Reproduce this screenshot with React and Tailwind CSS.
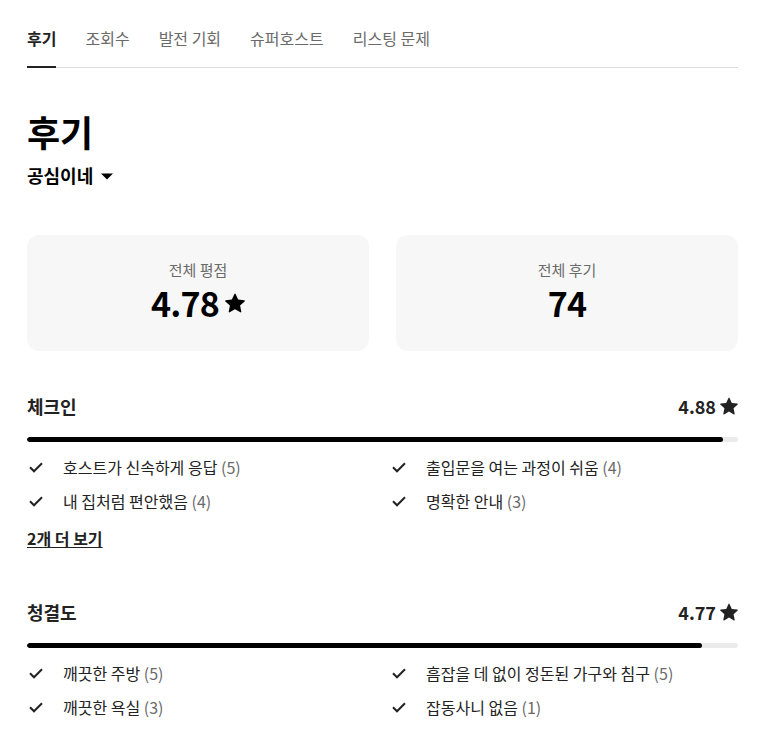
import React from 'react';

const tabs = ['후기', '조회수', '발전 기회', '슈퍼호스트', '리스팅 문제'];

const sections = [
  {
    title: '체크인',
    score: '4.88',
    ratio: 0.979,
    items: [
      ['호스트가 신속하게 응답', 5],
      ['출입문을 여는 과정이 쉬움', 4],
      ['내 집처럼 편안했음', 4],
      ['명확한 안내', 3],
    ],
    more: '2개 더 보기',
  },
  {
    title: '청결도',
    score: '4.77',
    ratio: 0.949,
    items: [
      ['깨끗한 주방', 5],
      ['흠잡을 데 없이 정돈된 가구와 침구', 5],
      ['깨끗한 욕실', 3],
      ['잡동사니 없음', 1],
    ],
  },
];

const Star = ({ className }) => (
  <svg viewBox="0 0 32 32" className={className} fill="currentColor">
    <path d="M15.1 1.58l-4.13 8.88-9.86 1.27a1 1 0 0 0-.54 1.74l7.3 6.57-1.97 9.85a1 1 0 0 0 1.48 1.06l8.62-5 8.63 5a1 1 0 0 0 1.48-1.06l-1.97-9.85 7.3-6.57a1 1 0 0 0-.55-1.73l-9.86-1.28-4.12-8.88a1 1 0 0 0-1.82 0z" />
  </svg>
);

const Check = () => (
  <svg viewBox="0 0 32 32" className="w-4 h-4 text-[#222]" fill="none" stroke="currentColor" strokeWidth="4">
    <path d="M4 16.5l8 8 16-16" />
  </svg>
);

const StatCard = ({ label, children }) => (
  <div className="h-[116px] pb-[4px] rounded-xl bg-[#f7f7f7] flex flex-col items-center justify-center">
    <div className="text-[15px] text-[#6a6a6a] leading-[18px] mb-[6px]">{label}</div>
    <div className="flex items-center gap-1.5 text-[34px] font-bold text-black leading-[36px] tracking-tight">{children}</div>
  </div>
);

const Section = ({ section }) => (
  <div className="mb-[50px]">
    <div className="flex items-center justify-between h-[24px]">
      <h3 className="text-[18px] font-semibold text-[#222]">{section.title}</h3>
      <div className="flex items-center gap-1 text-[18px] font-semibold text-[#222]">
        {section.score}
        <Star className="w-[18px] h-[18px]" />
      </div>
    </div>
    <div className="mt-[19px] h-[5px] rounded-full bg-[#ebebeb] overflow-hidden">
      <div className="h-full rounded-full bg-black" style={{ width: `${section.ratio * 100}%` }} />
    </div>
    <div className="mt-[15px] grid grid-cols-2 gap-x-[15px] gap-y-[14px]">
      {section.items.map(([label, n]) => (
        <div key={label} className="flex items-center h-5">
          <span className="w-9 pl-[1px] flex items-center"><Check /></span>
          <span className="text-[16px] leading-5 text-[#222]">
            {label} <span className="text-[#6a6a6a]">({n})</span>
          </span>
        </div>
      ))}
    </div>
    {section.more && (
      <button className="mt-[15px] text-[16px] leading-6 font-semibold text-[#222] underline underline-offset-2">{section.more}</button>
    )}
  </div>
);

export default function App() {
  return (
    <div className="bg-white min-h-screen pl-[27px] pr-[24px] pt-[26px] font-['Noto_Sans_CJK_KR','Noto_Sans',sans-serif] text-[#222]">
      <nav className="flex gap-[29px] border-b border-[#ddd]">
        {tabs.map((t, i) => (
          <div
            key={t}
            className={`pb-[16px] text-[16px] leading-6 border-b-2 -mb-px ${
              i === 0 ? 'border-[#222] text-[#222] font-semibold' : 'border-transparent text-[#6a6a6a]'
            }`}
          >
            {t}
          </div>
        ))}
      </nav>

      <h1 className="mt-[39px] text-[36px] font-bold leading-[48px] text-black">후기</h1>
      <button className="mt-[7px] flex items-center gap-2 text-[18px] font-semibold text-black">
        공심이네
        <svg viewBox="0 0 12 8" className="w-[12px] h-[8px]" fill="currentColor">
          <path d="M0 1.5h12L6 7.5z" />
        </svg>
      </button>

      <div className="mt-[46px] grid grid-cols-2 gap-[27px]">
        <StatCard label="전체 평점">
          4.78
          <Star className="w-[20px] h-[20px]" />
        </StatCard>
        <StatCard label="전체 후기">74</StatCard>
      </div>

      <div className="mt-[43px]">
        {sections.map((s) => (
          <Section key={s.title} section={s} />
        ))}
      </div>
    </div>
  );
}
